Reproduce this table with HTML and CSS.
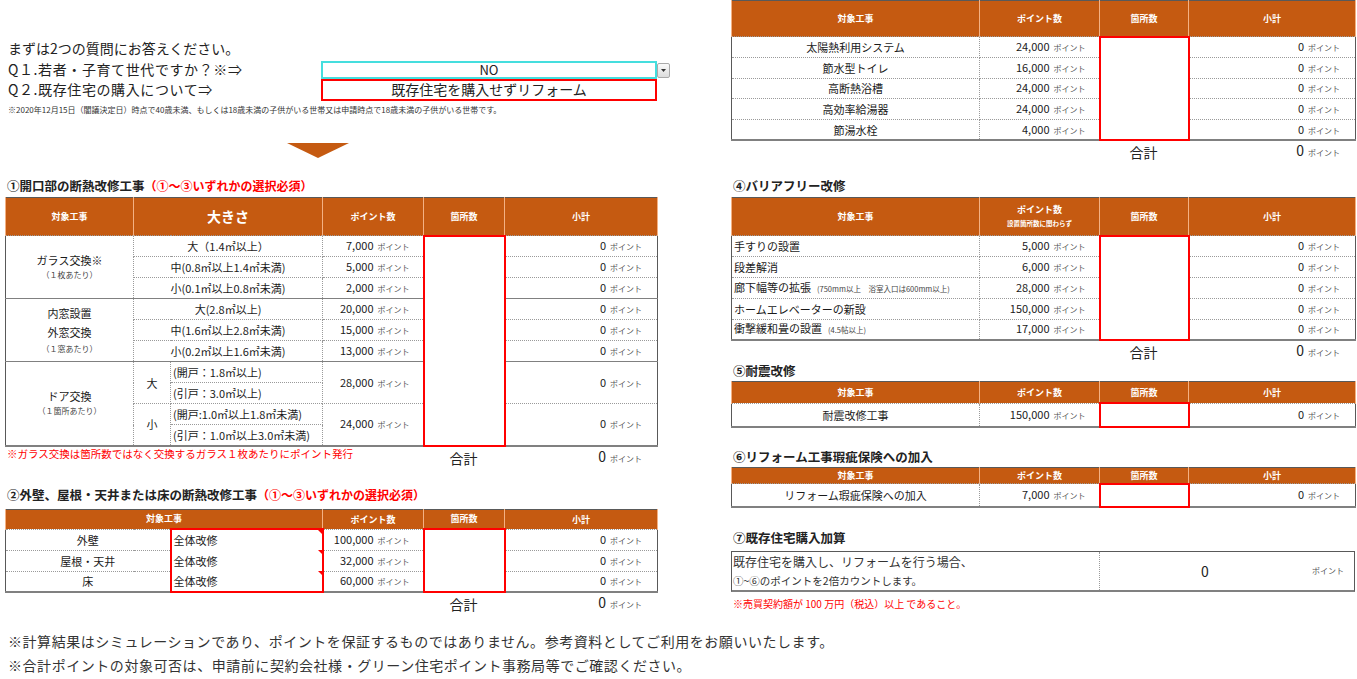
FILE: index.html
```html
<!DOCTYPE html>
<html lang="ja">
<head>
<meta charset="utf-8">
<title>ポイントシミュレーション</title>
<link rel="stylesheet" href="styles.css">
</head>
<body>
<div class="page">
  <div class="cols">
    <div class="col-left">
      <p class="intro">まずは2つの質問にお答えください。</p>
      <div class="qgrid">
        <div class="qlabel">Q１.若者・子育て世代ですか？※⇒</div>
        <div class="qselect">NO</div>
        <div class="qbtn"><svg width="5" height="3" viewBox="0 0 5 3"><path d="M0 0H5L2.5 3Z" fill="#333"/></svg></div>
        <div class="qlabel">Q２.既存住宅の購入について⇒</div>
        <div class="qanswer">既存住宅を購入せずリフォーム</div>
      </div>
      <p class="qnote">※2020年12月15日（閣議決定日）時点で40歳未満、もしくは18歳未満の子供がいる世帯又は申請時点で18歳未満の子供がいる世帯です。</p>
      <div class="arrow"></div>

      <h2 class="sec sec-1">①開口部の断熱改修工事<span class="req">（①～③いずれかの選択必須）</span></h2>
      <table class="tbl tbl-l">
        <colgroup><col class="c1"><col class="c2"><col class="c3"><col class="c4"><col class="c5"><col class="c6"></colgroup>
        <thead>
          <tr class="h38"><th>対象工事</th><th colspan="2" class="big">大きさ</th><th>ポイント数</th><th>箇所数</th><th>小計</th></tr>
        </thead>
        <tbody>
          <tr><td rowspan="3" class="grp">ガラス交換※<span class="tiny">（１枚あたり）</span></td><td colspan="2" class="ctr">大（1.4㎡以上）</td><td class="pt">7,000<span class="u">ポイント</span></td><td rowspan="10" class="cnt"></td><td class="sub">0<span class="u">ポイント</span></td></tr>
          <tr><td colspan="2" class="ctr">中(0.8㎡以上1.4㎡未満)</td><td class="pt">5,000<span class="u">ポイント</span></td><td class="sub">0<span class="u">ポイント</span></td></tr>
          <tr class="gend"><td colspan="2" class="ctr">小(0.1㎡以上0.8㎡未満)</td><td class="pt">2,000<span class="u">ポイント</span></td><td class="sub">0<span class="u">ポイント</span></td></tr>
          <tr><td rowspan="3" class="grp grp-win">内窓設置<br>外窓交換<span class="tiny">（１窓あたり）</span></td><td colspan="2" class="ctr">大(2.8㎡以上)</td><td class="pt">20,000<span class="u">ポイント</span></td><td class="sub">0<span class="u">ポイント</span></td></tr>
          <tr><td colspan="2" class="ctr">中(1.6㎡以上2.8㎡未満)</td><td class="pt">15,000<span class="u">ポイント</span></td><td class="sub">0<span class="u">ポイント</span></td></tr>
          <tr class="gend"><td colspan="2" class="ctr">小(0.2㎡以上1.6㎡未満)</td><td class="pt">13,000<span class="u">ポイント</span></td><td class="sub">0<span class="u">ポイント</span></td></tr>
          <tr><td rowspan="4" class="grp">ドア交換<span class="tiny">（１箇所あたり）</span></td><td rowspan="2" class="ctr sz">大</td><td class="lft">(開戸：1.8㎡以上)</td><td rowspan="2" class="pt">28,000<span class="u">ポイント</span></td><td rowspan="2" class="sub">0<span class="u">ポイント</span></td></tr>
          <tr><td class="lft">(引戸：3.0㎡以上)</td></tr>
          <tr><td rowspan="2" class="ctr sz">小</td><td class="lft">(開戸:1.0㎡以上1.8㎡未満)</td><td rowspan="2" class="pt">24,000<span class="u">ポイント</span></td><td rowspan="2" class="sub">0<span class="u">ポイント</span></td></tr>
          <tr><td class="lft">(引戸：1.0㎡以上3.0㎡未満)</td></tr>
        </tbody>
      </table>
      <div class="total total-l">
        <span class="tnote">※ガラス交換は箇所数ではなく交換するガラス１枚あたりにポイント発行</span>
        <span class="tlabel">合計</span>
        <span class="tval">0<span class="u">ポイント</span></span>
      </div>

      <h2 class="sec sec-2">②外壁、屋根・天井または床の断熱改修工事<span class="req">（①～③いずれかの選択必須）</span></h2>
      <table class="tbl tbl-l">
        <colgroup><col class="c1"><col class="c2"><col class="c3"><col class="c4"><col class="c5"><col class="c6"></colgroup>
        <thead>
          <tr class="h20"><th colspan="3">対象工事</th><th>ポイント数</th><th>箇所数</th><th>小計</th></tr>
        </thead>
        <tbody>
          <tr><td colspan="2" class="ctr">外壁</td><td class="sel sel-first">全体改修</td><td class="pt">100,000<span class="u">ポイント</span></td><td rowspan="3" class="cnt"></td><td class="sub">0<span class="u">ポイント</span></td></tr>
          <tr><td colspan="2" class="ctr">屋根・天井</td><td class="sel">全体改修</td><td class="pt">32,000<span class="u">ポイント</span></td><td class="sub">0<span class="u">ポイント</span></td></tr>
          <tr><td colspan="2" class="ctr">床</td><td class="sel sel-last">全体改修</td><td class="pt">60,000<span class="u">ポイント</span></td><td class="sub">0<span class="u">ポイント</span></td></tr>
        </tbody>
      </table>
      <div class="total total-l">
        <span class="tnote"></span>
        <span class="tlabel">合計</span>
        <span class="tval">0<span class="u">ポイント</span></span>
      </div>
    </div>

    <div class="col-right">
      <table class="tbl tbl-r tight">
        <colgroup><col class="r1"><col class="r2"><col class="r3"><col class="r4"></colgroup>
        <thead>
          <tr class="h36"><th>対象工事</th><th>ポイント数</th><th>箇所数</th><th>小計</th></tr>
        </thead>
        <tbody>
          <tr><td class="ctr">太陽熱利用システム</td><td class="pt">24,000<span class="u">ポイント</span></td><td rowspan="5" class="cnt"></td><td class="sub">0<span class="u">ポイント</span></td></tr>
          <tr><td class="ctr">節水型トイレ</td><td class="pt">16,000<span class="u">ポイント</span></td><td class="sub">0<span class="u">ポイント</span></td></tr>
          <tr><td class="ctr">高断熱浴槽</td><td class="pt">24,000<span class="u">ポイント</span></td><td class="sub">0<span class="u">ポイント</span></td></tr>
          <tr><td class="ctr">高効率給湯器</td><td class="pt">24,000<span class="u">ポイント</span></td><td class="sub">0<span class="u">ポイント</span></td></tr>
          <tr><td class="ctr">節湯水栓</td><td class="pt">4,000<span class="u">ポイント</span></td><td class="sub">0<span class="u">ポイント</span></td></tr>
        </tbody>
      </table>
      <div class="total total-r">
        <span class="tnote"></span>
        <span class="tlabel">合計</span>
        <span class="tval">0<span class="u">ポイント</span></span>
      </div>

      <h2 class="sec sec-4">④バリアフリー改修</h2>
      <table class="tbl tbl-r tight">
        <colgroup><col class="r1"><col class="r2"><col class="r3"><col class="r4"></colgroup>
        <thead>
          <tr class="h38"><th>対象工事</th><th>ポイント数<br><span class="hsub">設置箇所数に関わらず</span></th><th>箇所数</th><th>小計</th></tr>
        </thead>
        <tbody>
          <tr><td class="lft">手すりの設置</td><td class="pt">5,000<span class="u">ポイント</span></td><td rowspan="5" class="cnt"></td><td class="sub">0<span class="u">ポイント</span></td></tr>
          <tr><td class="lft">段差解消</td><td class="pt">6,000<span class="u">ポイント</span></td><td class="sub">0<span class="u">ポイント</span></td></tr>
          <tr><td class="lft">廊下幅等の拡張<span class="paren">(750mm以上　浴室入口は600mm以上)</span></td><td class="pt">28,000<span class="u">ポイント</span></td><td class="sub">0<span class="u">ポイント</span></td></tr>
          <tr><td class="lft">ホームエレベーターの新設</td><td class="pt">150,000<span class="u">ポイント</span></td><td class="sub">0<span class="u">ポイント</span></td></tr>
          <tr><td class="lft">衝撃緩和畳の設置<span class="paren">(4.5帖以上)</span></td><td class="pt">17,000<span class="u">ポイント</span></td><td class="sub">0<span class="u">ポイント</span></td></tr>
        </tbody>
      </table>
      <div class="total total-r">
        <span class="tnote"></span>
        <span class="tlabel">合計</span>
        <span class="tval">0<span class="u">ポイント</span></span>
      </div>

      <h2 class="sec sec-5">⑤耐震改修</h2>
      <table class="tbl tbl-r">
        <colgroup><col class="r1"><col class="r2"><col class="r3"><col class="r4"></colgroup>
        <thead>
          <tr class="h22"><th>対象工事</th><th>ポイント数</th><th>箇所数</th><th>小計</th></tr>
        </thead>
        <tbody>
          <tr class="h24"><td class="ctr">耐震改修工事</td><td class="pt">150,000<span class="u">ポイント</span></td><td class="cnt"></td><td class="sub">0<span class="u">ポイント</span></td></tr>
        </tbody>
      </table>

      <h2 class="sec sec-6">⑥リフォーム工事瑕疵保険への加入</h2>
      <table class="tbl tbl-r">
        <colgroup><col class="r1"><col class="r2"><col class="r3"><col class="r4"></colgroup>
        <thead>
          <tr class="h16"><th>対象工事</th><th>ポイント数</th><th>箇所数</th><th>小計</th></tr>
        </thead>
        <tbody>
          <tr class="h23"><td class="ctr">リフォーム瑕疵保険への加入</td><td class="pt">7,000<span class="u">ポイント</span></td><td class="cnt"></td><td class="sub">0<span class="u">ポイント</span></td></tr>
        </tbody>
      </table>

      <h2 class="sec sec-7">⑦既存住宅購入加算</h2>
      <div class="buybox">
        <div class="buytext">
          <div class="bt1">既存住宅を購入し、リフォームを行う場合、</div>
          <div class="bt2">①~⑥のポイントを2倍カウントします。</div>
        </div>
        <div class="buyval">
          <span class="bvnum">0</span>
          <span class="bvunit">ポイント</span>
        </div>
      </div>
      <p class="buynote">※売買契約額が 100 万円（税込）以上 であること。</p>
    </div>
  </div>

  <div class="footer">
    <p>※計算結果はシミュレーションであり、ポイントを保証するものではありません。参考資料としてご利用をお願いいたします。</p>
    <p>※合計ポイントの対象可否は、申請前に契約会社様・グリーン住宅ポイント事務局等でご確認ください。</p>
  </div>
</div>
</body>
</html>
```

FILE: styles.css
```css
* { box-sizing: border-box; }
html, body { margin: 0; padding: 0; background: #fff; }
body {
  font-family: "Noto Sans CJK JP", "Noto Sans", sans-serif;
  color: #222;
  width: 1357px;
  height: 679px;
  overflow: hidden;
}
p, h2 { margin: 0; }

.cols {
  display: flex;
  gap: 61px;
  padding-left: 5px;
  align-items: flex-start;
}
.col-left { width: 665px; }
.col-right { width: 624px; }

/* intro / questions */
.intro {
  padding: 38px 0 0 3px;
  font-size: 14px;
  line-height: 21px;
}
.qgrid {
  display: grid;
  grid-template-columns: 313px 336px 13px;
  grid-template-rows: 20px 22px;
  padding-left: 3px;
}
.qlabel {
  font-size: 14px;
  line-height: 21px;
  letter-spacing: 0.6px;
}
.qselect {
  margin-top: 2px;
  height: 18px;
  border: 2px solid #45dede;
  font-size: 13px;
  line-height: 14px;
  text-align: center;
}
.qbtn {
  margin-top: 4px;
  height: 15px;
  border: 1px solid #a9a9a9;
  border-radius: 2px;
  background: linear-gradient(#fafafa, #dcdcdc);
  display: flex;
  align-items: center;
  justify-content: center;
}
.qanswer {
  height: 22px;
  border: 2px solid #ff0000;
  font-size: 14px;
  line-height: 17px;
  text-align: center;
}
.qnote {
  padding: 3px 0 0 3px;
  font-size: 8px;
  line-height: 12px;
  color: #333;
}
.arrow {
  margin: 27px 0 0 282px;
  width: 0;
  height: 0;
  border-left: 31px solid transparent;
  border-right: 31px solid transparent;
  border-top: 15px solid #c55a11;
}

/* section headings */
.sec {
  font-size: 12.5px;
  font-weight: bold;
  line-height: 16px;
  color: #222;
  padding-left: 2px;
}
.sec .req { color: #ff0000; font-size: 12px; }
.sec-1 { margin-top: 20px; margin-bottom: 3px; }
.sec-2 { margin-top: 18px; margin-bottom: 6px; }
.sec-4 { margin-top: 15px; margin-bottom: 3px; }
.sec-5 { margin-top: 0; margin-bottom: 2px; }
.sec-6 { margin-top: 21px; margin-bottom: 2px; }
.sec-7 { margin-top: 22px; margin-bottom: 5px; }

/* tables */
.tbl {
  border-collapse: collapse;
  table-layout: fixed;
  font-size: 11px;
  color: #1a1a1a;
  border: 1px solid #595959;
  border-bottom: 2px solid #808080;
}
.tbl-l { width: 652px; }
.tbl-r { width: 624px; }
.c1 { width: 128px; }
.c2 { width: 37px; }
.c3 { width: 152px; }
.c4 { width: 101px; }
.c5 { width: 81px; }
.c6 { width: 153px; }
.r1 { width: 248px; }
.r2 { width: 120px; }
.r3 { width: 89px; }
.r4 { width: 167px; }

.tbl th {
  background: #c55a11;
  color: #fff;
  font-size: 9px;
  font-weight: bold;
  padding: 0;
  border-left: 1px solid #f4b183;
  border-right: 1px solid #f4b183;
  line-height: 13px;
}
.tbl th.big { font-size: 14px; }
.tbl th .hsub { font-size: 6.5px; }
.tbl td {
  border: 1px dotted #9a9a9a;
  padding: 0;
  vertical-align: middle;
  white-space: nowrap;
  line-height: 14px;
}
.tbl tbody tr { height: 21px; }
.tbl.tight tbody tr { height: 20.8px; }
.tbl tr.h16 { height: 16px; }
.tbl tr.h20 { height: 20px; }
.tbl tr.h22 { height: 22px; }
.tbl tr.h23 { height: 23px; }
.tbl tr.h24 { height: 24px; }
.tbl tr.h36 { height: 36px; }
.tbl tr.h38 { height: 38px; }

.tbl td.ctr { text-align: center; }
.tbl td.lft { text-align: left; padding-left: 2px; }
.tbl td.sz { font-size: 11px; }
.tbl td.grp {
  text-align: center;
  border-bottom: 1px solid #808080;
  line-height: 16px;
}
.tbl td.grp-win { line-height: 19px; }
.tbl tr.gend td { border-bottom: 1px solid #808080; }
.tiny { display: block; font-size: 8px; line-height: 14px; color: #444; }
.paren { font-size: 7.5px; color: #444; margin-left: 6px; }

.tbl td.pt { text-align: right; padding-right: 13px; }
.tbl td.sub { text-align: right; padding-right: 15px; }
.u { font-size: 8px; color: #555; margin-left: 4px; }

.tbl td.cnt { border: 2px solid #ff0000; }

.tbl td.sel {
  position: relative;
  text-align: left;
  padding-left: 2px;
  border-left: 2px solid #ff0000;
  border-right: 2px solid #ff0000;
  border-top: none;
  border-bottom: none;
}
.tbl td.sel-first { border-top: 2px solid #ff0000; }
.tbl td.sel-last { border-bottom: 2px solid #ff0000; }
.tbl td.sel::after {
  content: "";
  position: absolute;
  top: 0;
  right: 0;
  border-left: 4px solid transparent;
  border-top: 4px solid #ff0000;
}

/* totals */
.total {
  display: grid;
  height: 22px;
  align-items: start;
}
.total-l { grid-template-columns: 418px 81px 153px; }
.total-r { grid-template-columns: 368px 89px 167px; }
.tnote {
  font-size: 10.5px;
  color: #ff0000;
  padding-left: 2px;
  line-height: 14px;
}
.tlabel {
  text-align: center;
  font-size: 14px;
  line-height: 23px;
}
.tval {
  text-align: right;
  padding-right: 15px;
  font-size: 14px;
  line-height: 19px;
}

/* buy box */
.buybox {
  display: grid;
  grid-template-columns: 368px 256px;
  height: 41px;
  border: 1px solid #595959;
  border-bottom: 2px solid #808080;
}
.buytext {
  border-right: 1px dotted #9a9a9a;
  padding-left: 1px;
  color: #333;
}
.bt1 { font-size: 12px; line-height: 19px; }
.bt2 { font-size: 10.5px; line-height: 19px; }
.buyval {
  display: grid;
  grid-template-columns: 210px 1fr;
  align-items: center;
}
.bvnum { text-align: center; font-size: 14px; }
.bvunit { text-align: right; padding-right: 12px; font-size: 8px; color: #555; }
.buynote {
  font-size: 10px;
  line-height: 14px;
  color: #ff0000;
  padding: 5px 0 0 2px;
}

/* footer */
.footer {
  margin-top: 14px;
  padding-left: 8px;
  font-size: 14px;
  line-height: 24px;
  letter-spacing: 0.55px;
  color: #333;
}
```
